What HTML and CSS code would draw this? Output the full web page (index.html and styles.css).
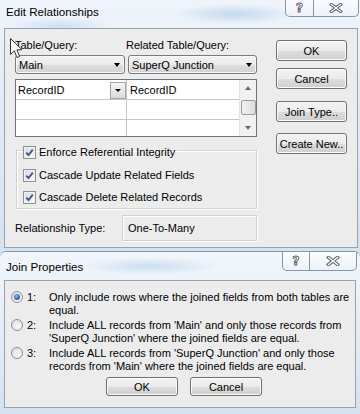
FILE: index.html
```html
<!DOCTYPE html>
<html lang="en">
<head>
    <meta charset="UTF-8">
    <meta name="viewport" content="width=device-width, initial-scale=1.0">
    <title>Edit Relationships</title>
    <link rel="stylesheet" href="styles.css">
</head>
<body>
    <div class="window edit-window">
        <div class="titlebar">
            <span class="title">Edit Relationships</span>
            <div class="controls">
                <span class="ctl help">?</span>
                <span class="ctl close">
                    <svg width="14" height="10" viewBox="0 0 14 10">
                        <path d="M2.5 1.5 L11.5 8.5 M11.5 1.5 L2.5 8.5" stroke="#56606c" stroke-width="3.4" stroke-linecap="square"/>
                        <path d="M2.5 1.5 L11.5 8.5 M11.5 1.5 L2.5 8.5" stroke="#fff" stroke-width="1.4" stroke-linecap="square"/>
                    </svg>
                </span>
            </div>
        </div>
        <div class="client">
            <div class="main-col">
                <div class="labels">
                    <span class="lbl-left">Table/Query:</span>
                    <span>Related Table/Query:</span>
                </div>
                <div class="combos">
                    <div class="combo combo-left">Main<span class="tri"></span></div>
                    <div class="combo combo-right">SuperQ Junction<span class="tri"></span></div>
                </div>
                <div class="grid">
                    <div class="grid-body">
                        <div class="grid-row row-first">
                            <div class="cell cell-left">RecordID<span class="cell-btn"><span class="tri small"></span></span></div>
                            <div class="cell">RecordID</div>
                        </div>
                        <div class="grid-row">
                            <div class="cell cell-left"></div>
                            <div class="cell"></div>
                        </div>
                        <div class="grid-row row-last">
                            <div class="cell cell-left"></div>
                            <div class="cell"></div>
                        </div>
                    </div>
                    <div class="scrollbar">
                        <div class="sb-btn"><span class="arrow-up"></span></div>
                        <div class="sb-thumb"></div>
                        <div class="sb-space"></div>
                        <div class="sb-btn"><span class="arrow-down"></span></div>
                    </div>
                </div>
                <fieldset class="group">
                    <legend class="check-row">
                        <span class="box"><svg width="9" height="9" viewBox="0 0 9 9"><path d="M1.2 4.6 L3.5 7 L7.8 1.6" fill="none" stroke="#3f5786" stroke-width="1.9"/></svg></span>
                        Enforce Referential Integrity
                    </legend>
                    <div class="check-row">
                        <span class="box"><svg width="9" height="9" viewBox="0 0 9 9"><path d="M1.2 4.6 L3.5 7 L7.8 1.6" fill="none" stroke="#3f5786" stroke-width="1.9"/></svg></span>
                        Cascade Update Related Fields
                    </div>
                    <div class="check-row">
                        <span class="box"><svg width="9" height="9" viewBox="0 0 9 9"><path d="M1.2 4.6 L3.5 7 L7.8 1.6" fill="none" stroke="#3f5786" stroke-width="1.9"/></svg></span>
                        Cascade Delete Related Records
                    </div>
                </fieldset>
                <div class="rel-type">
                    <span class="rel-label">Relationship Type:</span>
                    <div class="rel-value">One-To-Many</div>
                </div>
            </div>
            <div class="side-col">
                <button class="btn">OK</button>
                <button class="btn btn-cancel">Cancel</button>
                <button class="btn btn-join">Join Type..</button>
                <button class="btn btn-new">Create New..</button>
            </div>
        </div>
    </div>

    <div class="window join-window">
        <div class="titlebar">
            <span class="title">Join Properties</span>
            <div class="controls">
                <span class="ctl help">?</span>
                <span class="ctl close">
                    <svg width="14" height="10" viewBox="0 0 14 10">
                        <path d="M2.5 1.5 L11.5 8.5 M11.5 1.5 L2.5 8.5" stroke="#56606c" stroke-width="3.4" stroke-linecap="square"/>
                        <path d="M2.5 1.5 L11.5 8.5 M11.5 1.5 L2.5 8.5" stroke="#fff" stroke-width="1.4" stroke-linecap="square"/>
                    </svg>
                </span>
            </div>
        </div>
        <div class="client join-client">
            <div class="option">
                <span class="radio checked"><span class="dot"></span></span>
                <span class="num">1:</span>
                <span class="opt-text">Only include rows where the joined fields from both tables are<br>equal.</span>
            </div>
            <div class="option">
                <span class="radio"></span>
                <span class="num">2:</span>
                <span class="opt-text">Include ALL records from 'Main' and only those records from<br>'SuperQ Junction' where the joined fields are equal.</span>
            </div>
            <div class="option">
                <span class="radio"></span>
                <span class="num">3:</span>
                <span class="opt-text">Include ALL records from 'SuperQ Junction' and only those<br>records from 'Main' where the joined fields are equal.</span>
            </div>
            <div class="join-buttons">
                <button class="btn btn-small">OK</button>
                <button class="btn btn-small">Cancel</button>
            </div>
        </div>
    </div>

    <!-- mouse pointer over the first label -->
    <svg class="cursor" width="13" height="21" viewBox="0 0 13 21">
        <path d="M0.5 0.5 L0.5 16.5 L4.3 12.8 L7 19.5 L9.6 18.4 L6.9 11.8 L12 11.8 Z" fill="#fff" stroke="#333" stroke-width="1" stroke-linejoin="round"/>
    </svg>
</body>
</html>
```

FILE: styles.css
```css
body {
    margin: 0;
    width: 360px;
    height: 414px;
    overflow: hidden;
    position: relative;
    background-color: #cfdfee;
    font-family: "Liberation Sans", Arial, sans-serif;
    font-size: 11px;
    color: #000;
}
.window {
    box-sizing: border-box;
    background:
        radial-gradient(ellipse 60px 10px at 235px 14px, rgba(160, 195, 228, 0.55), transparent),
        radial-gradient(ellipse 50px 8px at 60px 26px, rgba(170, 200, 230, 0.45), transparent),
        linear-gradient(180deg, #eef4fa 0%, #e2ecf6 40%, #d4e3f1 100%);
}
.edit-window {
    height: 251px;
}
.join-window {
    height: 163px;
    border-top: 1px solid #8797a8;
    border-radius: 6px 6px 0 0;
    background:
        radial-gradient(ellipse 70px 9px at 150px 14px, rgba(170, 200, 230, 0.5), transparent),
        linear-gradient(180deg, #f1f6fb 0%, #e3edf7 50%, #d3e2f0 100%);
}
.titlebar {
    display: flex;
    justify-content: space-between;
    align-items: flex-start;
    height: 28px;
}
.title {
    font-size: 11.6px;
    line-height: 16px;
    padding: 4px 0 0 6px;
}
.join-window .title {
    padding-top: 7px;
}
.controls {
    display: flex;
    height: 16px;
    border: 1px solid #8495aa;
    border-top: none;
    border-radius: 0 0 5px 5px;
    background: linear-gradient(180deg, rgba(255, 255, 255, 0.75), rgba(235, 242, 249, 0.6));
    margin-right: 1px;
}
.join-window .controls {
    height: 18px;
    margin-right: 3px;
}
.ctl {
    display: flex;
    align-items: center;
    justify-content: center;
}
.help {
    width: 27px;
    border-right: 1px solid #8495aa;
    font-family: "DejaVu Sans", sans-serif;
    font-weight: bold;
    font-size: 12px;
    color: #fff;
    -webkit-text-stroke: 0.9px #56606c;
}
.close {
    width: 44px;
}
.join-window .help {
    width: 26px;
}
.join-window .close {
    width: 46px;
}
.client {
    box-sizing: border-box;
    margin-left: 4px;
    width: 354px;
    height: 220px;
    border: 1px solid #9aa3ad;
    background-color: #ececec;
    display: flex;
    align-items: flex-start;
    padding: 9px 10px 0 10px;
}
.main-col {
    width: 242px;
}
.labels {
    display: flex;
    height: 14px;
    line-height: 14px;
}
.lbl-left {
    width: 111px;
}
.combos {
    display: flex;
    gap: 3px;
    margin-top: 3px;
}
.combo {
    box-sizing: border-box;
    height: 19px;
    display: flex;
    align-items: center;
    justify-content: space-between;
    padding: 0 4px 0 3px;
    border: 1px solid #7a7a7a;
    border-radius: 3px;
    background: linear-gradient(180deg, #f3f3f3 0%, #ebebeb 50%, #dedede 51%, #d3d3d3 100%);
    box-shadow: inset 0 0 0 1px #f8f8f8;
}
.combo-left {
    width: 110px;
}
.combo-right {
    width: 129px;
}
.tri {
    width: 0;
    height: 0;
    border-left: 3.5px solid transparent;
    border-right: 3.5px solid transparent;
    border-top: 4px solid #000;
}
.grid {
    box-sizing: border-box;
    display: flex;
    height: 58px;
    margin-top: 5px;
    border: 1px solid #6f747a;
    background-color: #fff;
}
.grid-body {
    flex: 1;
    overflow: hidden;
}
.grid-row {
    display: flex;
    height: 19px;
    border-bottom: 1px solid #c6c6c6;
}
.row-last {
    border-bottom: none;
}
.cell {
    display: flex;
    align-items: center;
    justify-content: space-between;
    padding-left: 3px;
}
.cell-left {
    box-sizing: border-box;
    width: 111px;
    padding-left: 2px;
    border-right: 1px solid #c6c6c6;
}
.cell-btn {
    box-sizing: border-box;
    width: 16px;
    height: 17px;
    margin-top: 1px;
    display: flex;
    align-items: center;
    justify-content: center;
    border: 1px solid #a6a6a6;
    background: linear-gradient(180deg, #f4f4f4, #dadada);
}
.tri.small {
    border-left-width: 3px;
    border-right-width: 3px;
    border-top-width: 3px;
}
.scrollbar {
    width: 16px;
    display: flex;
    flex-direction: column;
    align-items: center;
    background-color: #f1f1f1;
    border-left: 1px solid #e4e4e4;
}
.sb-btn {
    height: 16px;
    width: 100%;
    display: flex;
    align-items: center;
    justify-content: center;
}
.arrow-up, .arrow-down {
    width: 0;
    height: 0;
    border-left: 3.5px solid transparent;
    border-right: 3.5px solid transparent;
}
.arrow-up {
    border-bottom: 4px solid #6b6b6b;
}
.arrow-down {
    border-top: 4px solid #6b6b6b;
}
.sb-thumb {
    box-sizing: border-box;
    width: 15px;
    height: 15px;
    margin-top: 4px;
    border: 1px solid #9a9a9a;
    border-radius: 2px;
    background: linear-gradient(90deg, #f3f3f3, #dcdcdc);
}
.sb-space {
    flex: 1;
}
.group {
    margin: 4px 0 0 1px;
    padding: 9px 6px 4px 6px;
    border: 1px solid #d2d2d2;
    box-shadow: 1px 1px 0 #fff, inset 1px 1px 0 #fff;
}
.group legend {
    padding: 4px 2px 0 0;
}
.check-row {
    display: flex;
    align-items: center;
    gap: 3px;
    height: 14px;
    line-height: 14px;
}
.group div.check-row + div.check-row {
    margin-top: 8px;
}
.box {
    box-sizing: border-box;
    width: 13px;
    height: 13px;
    display: flex;
    align-items: center;
    justify-content: center;
    border: 1px solid #8e8f8f;
    background: linear-gradient(135deg, #d6d9de, #fbfbfb);
    box-shadow: inset 0 0 0 1px #f2f2f2;
}
.rel-type {
    display: flex;
    align-items: center;
    margin-top: 6px;
}
.rel-label {
    width: 107px;
}
.rel-value {
    box-sizing: border-box;
    width: 135px;
    height: 26px;
    line-height: 24px;
    padding-left: 5px;
    border: 1px solid #d2d2d2;
    box-shadow: 1px 1px 0 #fff, inset 1px 1px 0 #fff;
}
.side-col {
    display: flex;
    flex-direction: column;
    margin-left: 19px;
    margin-top: 2px;
}
.btn {
    box-sizing: border-box;
    width: 71px;
    height: 21px;
    padding: 0;
    font-family: inherit;
    font-size: inherit;
    color: #000;
    border: 1px solid #707070;
    border-radius: 3px;
    background: linear-gradient(180deg, #f3f3f3 0%, #ebebeb 50%, #dddddd 51%, #cfcfcf 100%);
    box-shadow: inset 0 0 0 1px #fbfbfb;
}
.btn-cancel {
    margin-top: 7px;
}
.btn-join {
    margin-top: 12px;
}
.btn-new {
    margin-top: 11px;
}
.join-client {
    width: 352px;
    height: 128px;
    flex-direction: column;
    padding: 10px 0 0 6px;
}
.option {
    display: flex;
    align-items: flex-start;
    line-height: 12.5px;
}
.option + .option {
    margin-top: 3px;
}
.radio {
    box-sizing: border-box;
    width: 12px;
    height: 12px;
    border-radius: 50%;
    border: 1px solid #8e8f8f;
    background: radial-gradient(circle at 60% 65%, #fafafa, #d6d8dc);
    display: flex;
    align-items: center;
    justify-content: center;
}
.dot {
    width: 6px;
    height: 6px;
    border-radius: 50%;
    background: radial-gradient(circle at 40% 35%, #8fc0ee, #2a64a8 60%, #163e70);
}
.num {
    width: 22px;
    padding-left: 4px;
}
.join-buttons {
    display: flex;
    justify-content: center;
    gap: 12px;
    width: 346px;
    margin-top: 5px;
}
.btn-small {
    width: 72px;
    height: 19px;
}
.cursor {
    position: absolute;
    left: 10px;
    top: 38px;
}
```
